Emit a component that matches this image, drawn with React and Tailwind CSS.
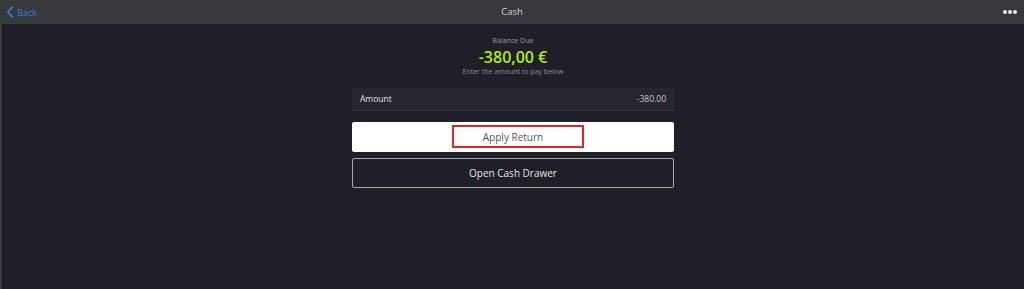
export default function App() {
  return (
    <div className="w-[1024px] h-[289px] flex flex-col bg-[#1e1f27] overflow-hidden" style={{ fontFamily: '"Open Sans", "Noto Sans", sans-serif' }}>
      <div className="h-[24px] shrink-0 bg-[#38393d] flex items-center justify-between px-[6px] relative">
        <div className="flex items-center gap-[2px] text-[#2f80d8] text-[9px] leading-none">
          <svg width="8" height="12" viewBox="0 0 8 12" fill="none">
            <path d="M6.5 1 L1.8 6 L6.5 11" stroke="#2f80d8" strokeWidth="1.8" strokeLinecap="round" strokeLinejoin="round" />
          </svg>
          <span className="ml-[1px]">Back</span>
        </div>
        <div className="absolute left-0 right-0 text-center text-[#d0d0d2] text-[9.5px] leading-none pointer-events-none">Cash</div>
        <div className="flex items-center gap-[1px] mr-[1px]">
          <span className="w-[4px] h-[4px] rounded-full bg-[#e8e8e8]" />
          <span className="w-[4px] h-[4px] rounded-full bg-[#e8e8e8]" />
          <span className="w-[4px] h-[4px] rounded-full bg-[#e8e8e8]" />
        </div>
      </div>
      <div className="flex-1 flex">
        <div className="w-[2px] bg-[#3c3d42]" />
        <div className="flex-1 flex flex-col items-center pt-[13px]">
          <div className="text-[7px] text-[#9a9ba3] leading-[8px]">Balance Due</div>
          <div className="text-[16px] font-semibold text-[#b4ea1c] leading-[16px] mt-[4px]">-380,00 €</div>
          <div className="text-[7px] text-[#8c8d95] leading-[8px] mt-[3px]">Enter the amount to pay below</div>
          <div className="w-[322px] mt-[12px] flex flex-col">
            <div className="h-[23px] bg-[#25262e] border-b border-[#34353d] flex items-center justify-between px-[8px] text-[8.5px] text-[#e4e4e8]">
              <span>Amount</span>
              <span className="text-[#c8c8cc]">-380.00</span>
            </div>
            <div className="mt-[11px] h-[30px] bg-white rounded-[2px] flex items-center justify-center relative">
              <span className="text-[10px] text-[#55565b]">Apply Return</span>
              <div className="absolute left-[100px] top-[3px] w-[132px] h-[23px] border-2 border-[#e3232b]" />
            </div>
            <div className="mt-[6px] h-[30px] border border-[#a9aaae] rounded-[2px] flex items-center justify-center">
              <span className="text-[10px] text-[#e4e4e6]">Open Cash Drawer</span>
            </div>
          </div>
        </div>
      </div>
    </div>
  );
}
